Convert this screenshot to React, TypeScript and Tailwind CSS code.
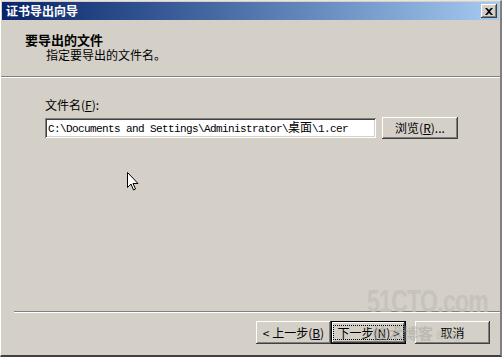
import React from "react";

const cjk = "font-['SimSun','Noto_Sans_CJK_SC',sans-serif]";
const raised =
  "shadow-[inset_-1px_-1px_#404040,inset_1px_1px_#ffffff,inset_-2px_-2px_#808080,inset_2px_2px_#d4d0c8]";

function Btn({ children, def = false }: { children: React.ReactNode; def?: boolean }) {
  return (
    <div
      className={`w-[75px] h-[23px] bg-[#d4d0c8] flex items-center justify-center text-[12px] text-black ${cjk} ${
        def ? "border border-black" : ""
      } ${raised}`}
    >
      {def ? (
        <span className="border border-dotted border-black px-[3px] leading-[13px]">{children}</span>
      ) : (
        children
      )}
    </div>
  );
}

export default function App() {
  return (
    <div className="w-[502px] h-[357px] bg-[#d4d0c8] relative flex flex-col overflow-hidden border-t border-t-[#e8e6e0] border-l border-l-white border-r-2 border-r-[#808080] border-b-2 border-b-[#404040]">
      {/* title bar */}
      <div className="h-[18px] mt-[1px] mx-[1px] flex items-center justify-between bg-gradient-to-r from-[#0a246a] to-[#a6caf0] pl-[4px] pr-[2px]">
        <span className={`text-white font-bold text-[12px] leading-none ${cjk}`}>证书导出向导</span>
        <div className={`w-[16px] h-[14px] bg-[#d4d0c8] flex items-center justify-center ${raised}`}>
          <svg width="8" height="7" viewBox="0 0 8 7">
            <path d="M0 0h2l2 2 2-2h2L5 3.5 8 7H6L4 5 2 7H0l3-3.5z" fill="#000" />
          </svg>
        </div>
      </div>

      {/* header */}
      <div className="h-[56px] pl-[24px] pt-[12px] flex flex-col gap-[1px]">
        <div className={`text-[13px] font-bold text-black leading-[15px] ${cjk}`}>要导出的文件</div>
        <div className={`text-[12px] text-black leading-[14px] pl-[21px] ${cjk}`}>指定要导出的文件名。</div>
      </div>
      <div className="h-[2px] border-t border-t-[#808080] border-b border-b-white" />

      {/* body */}
      <div className="pl-[44px] pt-[20px] flex flex-col gap-[5px]">
        <div className={`text-[12px] text-black leading-[14px] ${cjk}`}>
          文件名(<span className="underline">F</span>):
        </div>
        <div className="flex items-center gap-[6px]">
          <div className="w-[331px] h-[20px] bg-white flex items-center pl-[3px] shadow-[inset_1px_1px_#808080,inset_-1px_-1px_#ffffff,inset_2px_2px_#404040,inset_-2px_-2px_#d4d0c8]">
            <span className="font-['Liberation_Mono','Noto_Sans_CJK_SC',monospace] text-[11px] tracking-[-0.6px] text-black whitespace-nowrap">
              C:\Documents and Settings\Administrator\
              <span className={`${cjk} text-[12px] tracking-normal`}>桌面</span>\1.cer
            </span>
          </div>
          <div className={`w-[76px] h-[22px] bg-[#d4d0c8] flex items-center justify-center text-[12px] text-black ${cjk} ${raised}`}>
            浏览(<span className="underline">R</span>)...
          </div>
        </div>
      </div>

      <div className="flex-1" />

      <div className="ml-[13px] h-[2px] border-t border-t-[#808080] border-b border-b-white" />
      <div className="h-[42px] flex items-start justify-end pt-[8px] pr-[10px]">
        <div className="flex">
          <Btn>&lt; 上一步(<span className="underline">B</span>)</Btn>
          <Btn def>
            下一步(<span className="underline">N</span>) &gt;
          </Btn>
        </div>
        <div className="ml-[9px]">
          <Btn>取消</Btn>
        </div>
      </div>

      {/* watermark */}
      <div className="absolute left-[366px] top-[284px] origin-left scale-x-[0.72] text-[32px] font-bold leading-none text-[#c4c0b8] font-['Liberation_Sans',sans-serif] tracking-[-1px] opacity-80 pointer-events-none whitespace-nowrap">
        51CTO.com
      </div>
      <div className={`absolute left-[372px] top-[324px] text-[15px] font-bold leading-none text-[#a8a49c] opacity-50 pointer-events-none ${cjk}`}>
        技术博客 <span className="font-['Liberation_Sans',sans-serif] text-[11px] text-[#bcb8b0]">Blog</span>
      </div>

      {/* mouse cursor */}
      <svg className="absolute left-[126px] top-[171px]" width="12" height="20" viewBox="0 0 12 20">
        <path d="M0.5 0.5v15l3.5-3.5 2.5 6 2-1-2.5-5.5h5z" fill="#fff" stroke="#000" strokeWidth="1" />
      </svg>
    </div>
  );
}
